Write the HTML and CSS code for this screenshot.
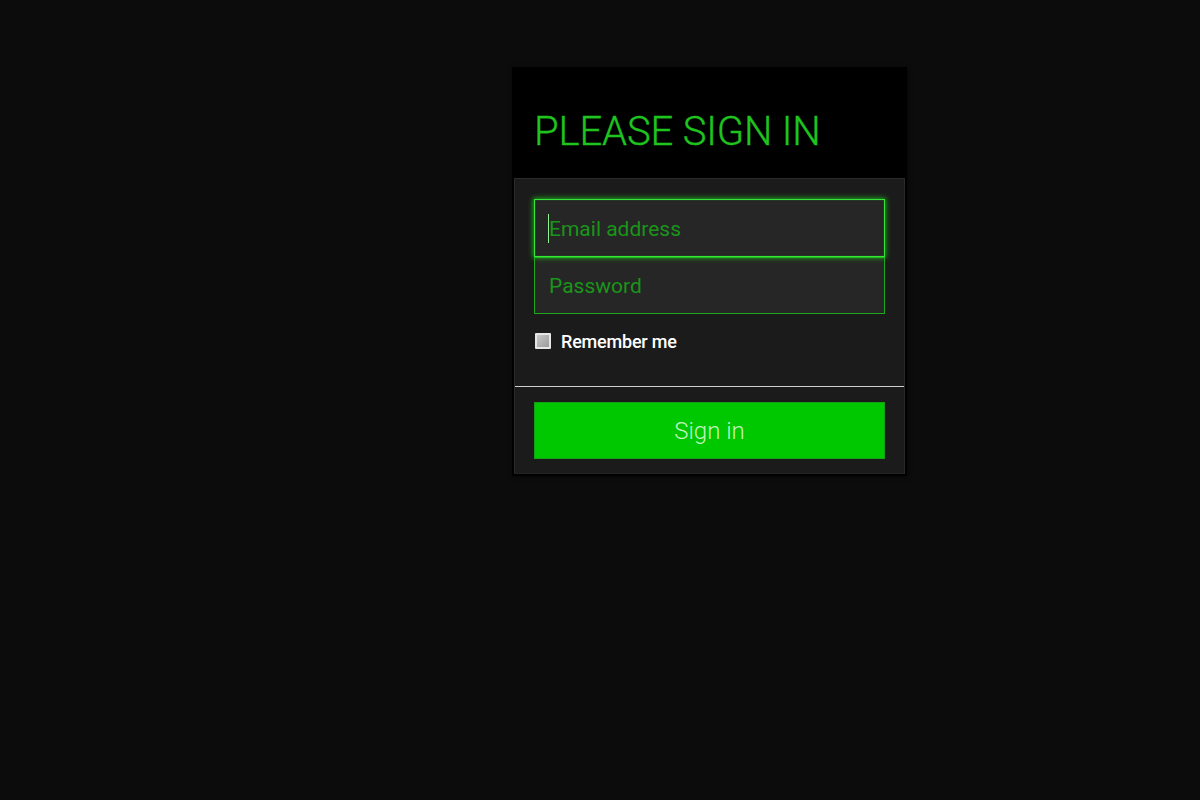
FILE: index.html
```html
<!DOCTYPE html>
<html lang="en">
<head>
<meta charset="utf-8">
<title>Please sign in</title>
<link rel="stylesheet" href="styles.css">
</head>
<body>
<div class="card">
  <div class="card-head">
    <h1 class="title">PLEASE SIGN IN</h1>
  </div>
  <form class="panel">
    <div class="fields">
      <div class="field field-focus">
        <input class="input" type="text" placeholder="Email address">
        <span class="caret"></span>
      </div>
      <div class="field">
        <input class="input input-dim" type="password" placeholder="Password">
      </div>
      <label class="remember">
        <input class="check" type="checkbox">
        <span>Remember me</span>
      </label>
    </div>
    <div class="actions">
      <button class="btn" type="button">Sign in</button>
    </div>
  </form>
</div>
</body>
</html>
```
FILE: styles.css
```css
html, body {
  margin: 0;
  padding: 0;
  background: #0c0c0c;
  height: 100%;
}
body {
  font-family: Roboto, "Liberation Sans", sans-serif;
  padding-top: 67px;
  box-sizing: border-box;
}
.card {
  margin-left: 512px;
  width: 395px;
  box-sizing: border-box;
  background: #000;
  padding: 0 2px 2px 2px;
  box-shadow: 1px 1px 4px rgba(0,0,0,0.6);
}
.card-head {
  height: 111px;
  box-sizing: border-box;
  padding: 45px 0 0 20px;
}
.title {
  margin: 0;
  font-size: 40px;
  line-height: 40px;
  font-weight: 300;
  color: #1fc41f;
  letter-spacing: -0.15px;
  -webkit-text-stroke: 0.3px #1fc41f;
}
.panel {
  margin: 0;
  background: #1b1b1b;
  border: 1px solid #2a2a2a;
  border-bottom-color: #222;
}
.fields {
  padding: 20px 19px 35px 19px;
}
.field {
  position: relative;
}
.input {
  display: block;
  width: 100%;
  height: 57px;
  box-sizing: border-box;
  margin: 0;
  padding: 1px 14px 0 14px;
  background: #262626;
  border: 1px solid #1ea81e;
  font-family: Roboto, "Liberation Sans", sans-serif;
  font-size: 21px;
  color: #1fa01f;
  outline: none;
  border-radius: 0;
}
.input::placeholder {
  color: #1a951a;
  opacity: 1;
}
.field-focus .input {
  height: 58px;
  border-color: #36e636;
  box-shadow: 0 0 5px 1px rgba(30, 205, 30, 0.8), inset 0 0 1px rgba(40, 220, 40, 0.9);
  position: relative;
  z-index: 1;
}
.caret {
  position: absolute;
  left: 14px;
  top: 15px;
  width: 1px;
  height: 29px;
  background: #8ef08e;
  z-index: 2;
}
.remember {
  display: flex;
  align-items: center;
  margin-top: 17px;
  height: 20px;
  padding-left: 1px;
  font-size: 18px;
  font-weight: 500;
  color: #fff;
  letter-spacing: -0.2px;
}
.check {
  appearance: none;
  -webkit-appearance: none;
  margin: 0 10px 0 0;
  width: 16px;
  height: 16px;
  box-sizing: border-box;
  border: 2px solid #e6e6e6;
  background: linear-gradient(135deg, #c8c8c8, #9c9c9c);
  border-radius: 1px;
}
.actions {
  border-top: 1px solid #cfcfcf;
  padding: 15px 19px 14px 19px;
}
.btn {
  display: block;
  width: 100%;
  height: 57px;
  margin: 0;
  background: #00c800;
  border: 1px solid #14a014;
  color: #bff3bf;
  font-family: Roboto, "Liberation Sans", sans-serif;
  font-size: 24px;
  font-weight: 300;
  border-radius: 0;
  cursor: pointer;
}
```
